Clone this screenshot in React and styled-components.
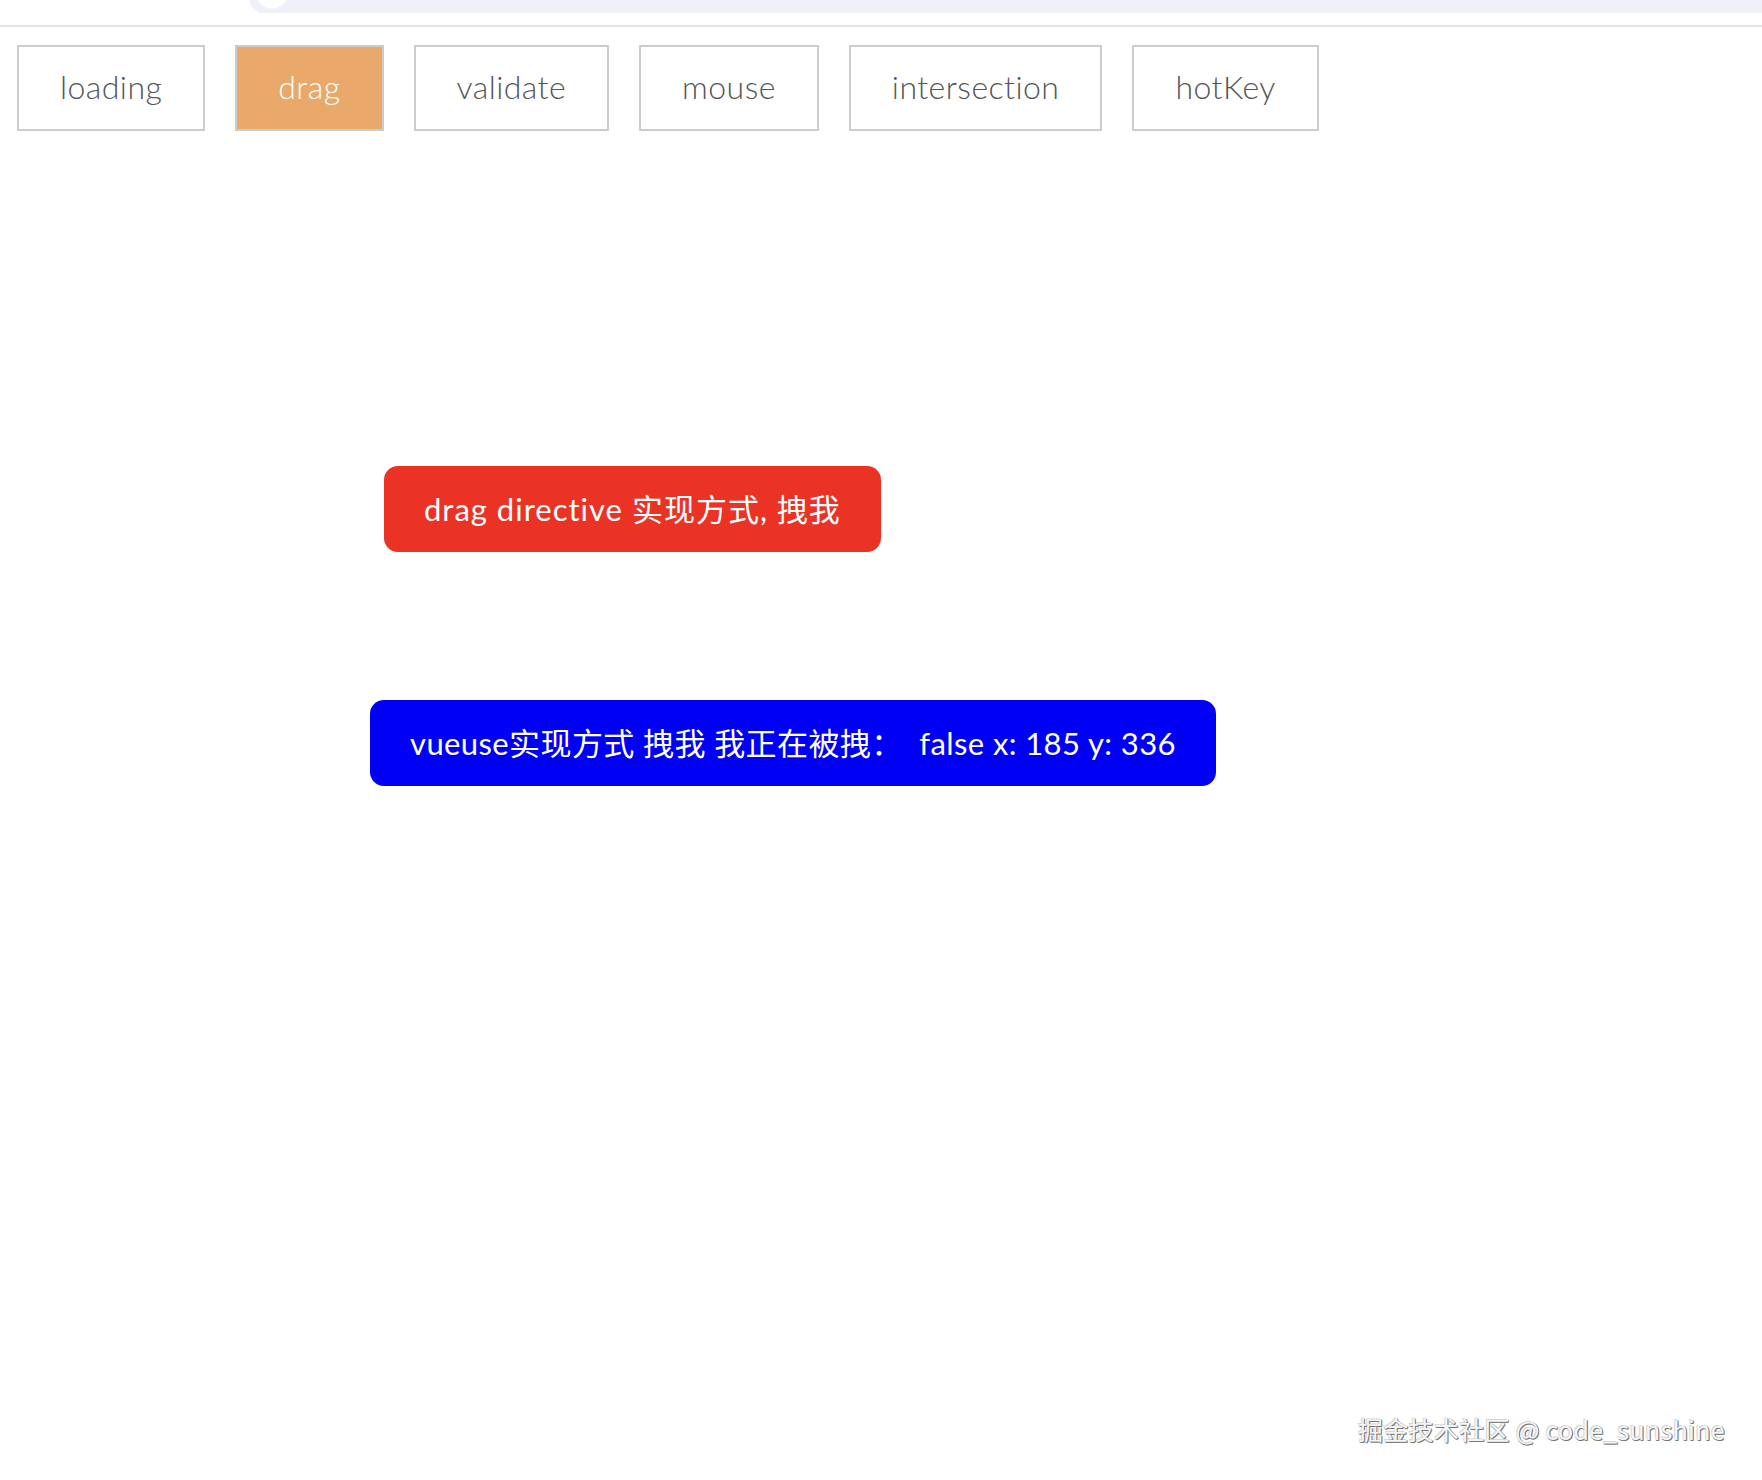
import React from "react";
import styled, { createGlobalStyle } from "styled-components";

const Global = createGlobalStyle`
  html, body {
    margin: 0;
    padding: 0;
    background: #ffffff;
  }
  body {
    font-family: Lato, "Noto Sans CJK SC", sans-serif;
  }
`;

const Page = styled.div`
  position: relative;
  display: flex;
  flex-direction: column;
  width: 1762px;
  height: 1480px;
  overflow: hidden;
  background: #fff;
`;

const BrowserStrip = styled.header`
  height: 25px;
  border-bottom: 2px solid #e3e3e3;
  padding-left: 250px;
`;

const AddressBar = styled.div`
  height: 13px;
  background:
    radial-gradient(circle at 22px -8px, #ffffff 0 16px, transparent 17px),
    #eef1f8;
  border-bottom-left-radius: 14px;
`;

const Toolbar = styled.nav`
  display: flex;
  gap: 30px;
  padding: 18px 0 0 17px;
`;

const TabButton = styled.button`
  display: inline-flex;
  align-items: center;
  justify-content: center;
  height: 86px;
  padding: 0 41px 4px;
  box-sizing: border-box;
  border: 2px solid #cccccc;
  border-radius: 0;
  background: ${(p) => (p.$active ? "#e9a96b" : "#ffffff")};
  color: ${(p) => (p.$active ? "#ffffff" : "#555555")};
  font-family: Lato, "Noto Sans CJK SC", sans-serif;
  font-size: 32px;
  font-weight: 300;
  letter-spacing: 0.45px;
  cursor: pointer;
`;

const Canvas = styled.main`
  position: relative;
  flex: 1;
`;

const DragBox = styled.div`
  position: absolute;
  left: ${(p) => p.$x}px;
  top: ${(p) => p.$y}px;
  display: flex;
  align-items: center;
  height: 86px;
  padding: 0 40px 4px;
  box-sizing: border-box;
  border-radius: 14px;
  background: ${(p) => p.$bg};
  color: #ffffff;
  font-family: Lato, "Noto Sans CJK SC", sans-serif;
  font-size: 31px;
  font-weight: 400;
  letter-spacing: ${(p) => p.$tracking}px;
  white-space: pre;
  cursor: move;
  user-select: none;
`;

const Watermark = styled.div`
  position: absolute;
  right: 37px;
  bottom: 33px;
  font-family: "Noto Sans CJK SC", "Noto Sans", sans-serif;
  font-size: 25px;
  color: #f6f6f6;
  text-shadow: 1px 1px 0 #777, -1px -1px 0 #d6d6d6, 1px 0 0 #999, 0 1px 0 #999;
  letter-spacing: 0.3px;
`;

const tabs = ["loading", "drag", "validate", "mouse", "intersection", "hotKey"];

export default function App() {
  return (
    <Page>
      <Global />
      <BrowserStrip>
        <AddressBar />
      </BrowserStrip>
      <Toolbar>
        {tabs.map((t) => (
          <TabButton key={t} $active={t === "drag"}>
            {t}
          </TabButton>
        ))}
      </Toolbar>
      <Canvas>
        <DragBox $x={384} $y={335} $bg="#ea3324" $tracking={1}>
          drag directive 实现方式, 拽我
        </DragBox>
        <DragBox $x={370} $y={569} $bg="#0000f5" $tracking={0.4}>
          {"vueuse实现方式 拽我 我正在被拽：  false x: 185 y: 336"}
        </DragBox>
      </Canvas>
      <Watermark>掘金技术社区 @ code_sunshine</Watermark>
    </Page>
  );
}
